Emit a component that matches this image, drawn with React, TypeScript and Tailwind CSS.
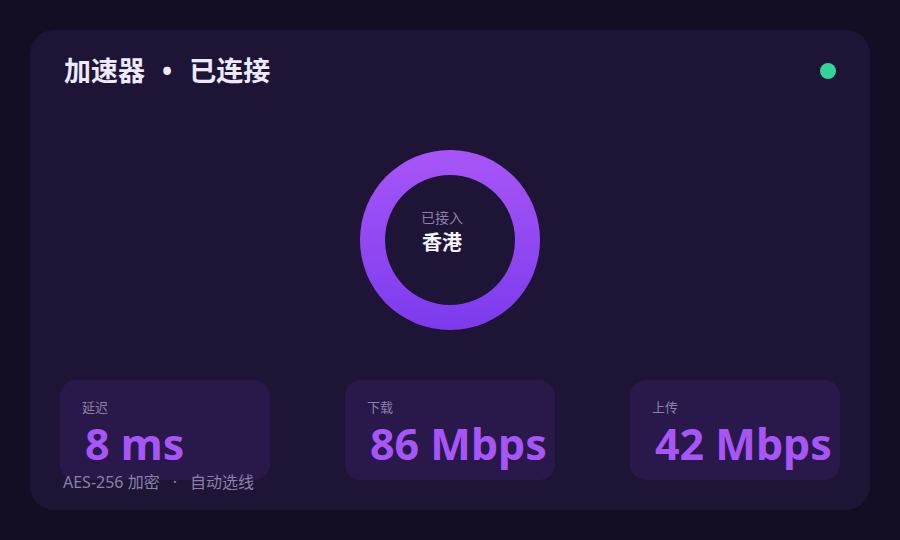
export default function App() {
  const stats = [
    { label: "延迟", value: "8 ms" },
    { label: "下载", value: "86 Mbps" },
    { label: "上传", value: "42 Mbps" },
  ];

  return (
    <div
      className="w-[900px] h-[540px] bg-[#150d24] p-[30px]"
      style={{ fontFamily: '"Noto Sans", "Noto Sans CJK SC", sans-serif' }}
    >
      <div className="h-[480px] rounded-[24px] bg-[#1e1536] flex flex-col px-[30px] pt-[22px]">
        {/* header */}
        <div className="flex items-center justify-between pl-[4px] pr-[4px]">
          <h1 className="text-[27px] leading-[38px] font-bold text-[#ede9fe]">
            加速器<span className="mx-[17px]">•</span>已连接
          </h1>
          <span className="w-4 h-4 rounded-full bg-[#34d399]" />
        </div>

        {/* ring */}
        <div className="flex justify-center mt-[60px]">
          <div className="w-[180px] h-[180px] rounded-full bg-gradient-to-b from-[#a855f7] to-[#7c3aed] flex items-center justify-center">
            <div className="w-[130px] h-[130px] rounded-full bg-[#1e1536] flex flex-col items-center justify-center pr-[16px] pb-[14px]">
              <span className="text-[14px] leading-[20px] text-[#8b80a8]">已接入</span>
              <span className="text-[20px] leading-[30px] font-bold text-[#f5f3ff]">香港</span>
            </div>
          </div>
        </div>

        {/* stats */}
        <div className="flex justify-between mt-[50px]">
          {stats.map((s) => (
            <div
              key={s.label}
              className="w-[210px] h-[100px] rounded-[16px] bg-[#28194a] pl-[22px] pt-[18px]"
            >
              <div className="text-[13px] leading-[18px] text-[#8b80a8]">{s.label}</div>
              <div className="mt-[6px] text-[43px] leading-[44px] font-bold text-[#a855f7] pl-[3px] whitespace-nowrap">
                {s.value}
              </div>
            </div>
          ))}
        </div>

        {/* footer */}
        <div className="-mt-[8px] pl-[3px] text-[16px] leading-[20px] text-[#8b80a8]">
          AES-256 加密<span className="mx-[13px]">·</span>自动选线
        </div>
      </div>
    </div>
  );
}
